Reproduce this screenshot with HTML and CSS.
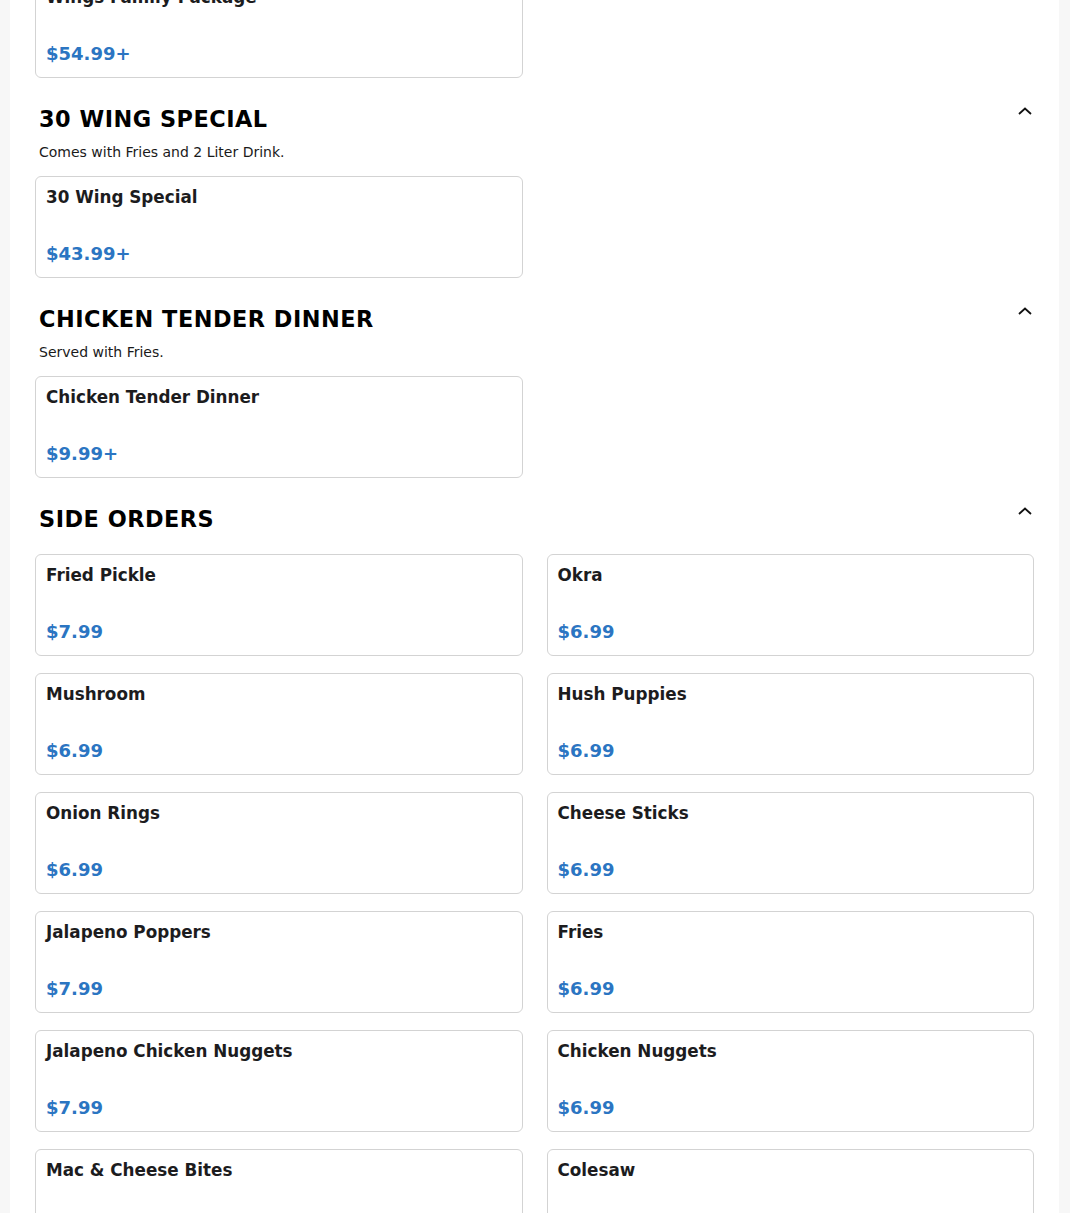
FILE: index.html
```html
<!DOCTYPE html>
<html lang="en">
<head>
<meta charset="utf-8">
<title>Menu</title>
<link rel="stylesheet" href="styles.css">
</head>
<body>
<main class="panel">
  <div class="scrolled">
    <section class="section first">
      <div class="grid">
        <article class="card"><h3 class="name">Wings Family Package</h3><div class="price">$54.99+</div></article>
      </div>
    </section>

    <section class="section">
      <header class="head">
        <h2 class="title">30 WING SPECIAL</h2>
        <svg class="chev" width="14" height="8" viewBox="0 0 14 8"><path d="M1 7 L7 1.5 L13 7" fill="none" stroke="#111" stroke-width="1.8"/></svg>
      </header>
      <p class="desc">Comes with Fries and 2 Liter Drink.</p>
      <div class="grid">
        <article class="card"><h3 class="name">30 Wing Special</h3><div class="price">$43.99+</div></article>
      </div>
    </section>

    <section class="section">
      <header class="head">
        <h2 class="title">CHICKEN TENDER DINNER</h2>
        <svg class="chev" width="14" height="8" viewBox="0 0 14 8"><path d="M1 7 L7 1.5 L13 7" fill="none" stroke="#111" stroke-width="1.8"/></svg>
      </header>
      <p class="desc">Served with Fries.</p>
      <div class="grid">
        <article class="card"><h3 class="name">Chicken Tender Dinner</h3><div class="price">$9.99+</div></article>
      </div>
    </section>

    <section class="section">
      <header class="head">
        <h2 class="title">SIDE ORDERS</h2>
        <svg class="chev" width="14" height="8" viewBox="0 0 14 8"><path d="M1 7 L7 1.5 L13 7" fill="none" stroke="#111" stroke-width="1.8"/></svg>
      </header>
      <div class="grid">
        <article class="card"><h3 class="name">Fried Pickle</h3><div class="price">$7.99</div></article>
        <article class="card"><h3 class="name">Okra</h3><div class="price">$6.99</div></article>
        <article class="card"><h3 class="name">Mushroom</h3><div class="price">$6.99</div></article>
        <article class="card"><h3 class="name">Hush Puppies</h3><div class="price">$6.99</div></article>
        <article class="card"><h3 class="name">Onion Rings</h3><div class="price">$6.99</div></article>
        <article class="card"><h3 class="name">Cheese Sticks</h3><div class="price">$6.99</div></article>
        <article class="card"><h3 class="name">Jalapeno Poppers</h3><div class="price">$7.99</div></article>
        <article class="card"><h3 class="name">Fries</h3><div class="price">$6.99</div></article>
        <article class="card"><h3 class="name">Jalapeno Chicken Nuggets</h3><div class="price">$7.99</div></article>
        <article class="card"><h3 class="name">Chicken Nuggets</h3><div class="price">$6.99</div></article>
        <article class="card"><h3 class="name">Mac &amp; Cheese Bites</h3><div class="price">$6.99</div></article>
        <article class="card"><h3 class="name">Colesaw</h3><div class="price">$3.99</div></article>
      </div>
    </section>
  </div>
</main>
</body>
</html>
```

FILE: styles.css
```css
html, body {
  margin: 0;
  padding: 0;
  background: #f7f7f7;
  font-family: "DejaVu Sans", "Liberation Sans", sans-serif;
  color: #1c1c1c;
  overflow: hidden;
}

.panel {
  margin: 0 11px 0 10px;
  background: #ffffff;
  padding: 0 25px;
  height: 1213px;
  overflow: hidden;
}

.scrolled {
  margin-top: -24px;
}

.section {
  padding-top: 27px;
}

.section.first {
  padding-top: 0;
}

.head {
  display: flex;
  justify-content: space-between;
  align-items: flex-start;
  padding-bottom: 8px;
}

.title {
  margin: 0 0 0 4px;
  font-size: 22.4px;
  line-height: 28px;
  font-weight: 700;
  letter-spacing: 0.5px;
  color: #000;
}

.chev {
  margin-top: 2px;
  margin-right: 2px;
  display: block;
}

.desc {
  margin: 0 0 0 4px;
  font-size: 14px;
  line-height: 22px;
  color: #1a1a1a;
}

.grid {
  display: grid;
  grid-template-columns: 1fr 1fr;
  column-gap: 24px;
  row-gap: 17px;
  margin-top: 13px;
}

.section.first .grid {
  margin-top: 0;
}

.card {
  box-sizing: border-box;
  height: 102px;
  border: 1px solid #d3d3d3;
  border-radius: 6px;
  padding: 10px 10px 12px;
  display: flex;
  flex-direction: column;
  justify-content: space-between;
  background: #fff;
}

.name {
  margin: 0;
  font-size: 16.8px;
  line-height: 20px;
  font-weight: 700;
  color: #1c1c1e;
}

.price {
  font-size: 18px;
  line-height: 22px;
  font-weight: 700;
  color: #2b75c2;
}
```
